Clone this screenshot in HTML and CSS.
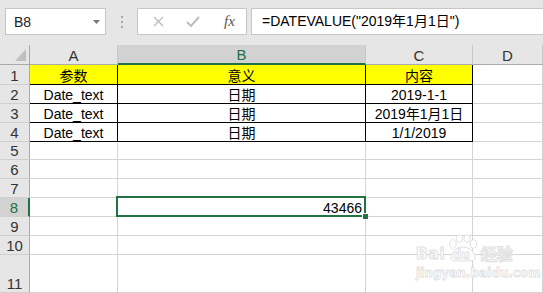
FILE: index.html
```html
<!DOCTYPE html>
<html lang="zh">
<head>
  <meta charset="UTF-8">
  <title>DATEVALUE</title>
  <link rel="stylesheet" href="styles.css">
</head>
<body>

<div class="app">

  <!-- 编辑栏 -->
  <div class="toolbar">
    <div class="namebox">
      <span>B8</span>
      <svg class="drop" width="7" height="4" viewBox="0 0 7 4"><path d="M0 0h7L3.5 4z" fill="#777"/></svg>
    </div>
    <div class="grip"><i></i><i></i><i></i></div>
    <div class="fbtns">
      <svg width="11" height="11" viewBox="0 0 11 11"><path d="M1 1l9 9M10 1l-9 9" stroke="#bdbdbd" stroke-width="1.4" fill="none"/></svg>
      <svg width="14" height="11" viewBox="0 0 14 11"><path d="M1 6l4 4 8-9" stroke="#bdbdbd" stroke-width="2" fill="none"/></svg>
      <span class="fx">fx</span>
    </div>
    <div class="formula">=DATEVALUE("2019年1月1日")</div>
  </div>

  <!-- 表格 -->
  <div class="sheet">
    <div class="corner"></div>
    <div class="colhead">A</div>
    <div class="colhead active">B</div>
    <div class="colhead">C</div>
    <div class="colhead">D</div>

    <div class="rowhead">1</div>
    <div class="cell tb yellow">参数</div>
    <div class="cell tb yellow">意义</div>
    <div class="cell tb yellow">内容</div>
    <div class="cell"></div>

    <div class="rowhead">2</div>
    <div class="cell tb">Date_text</div>
    <div class="cell tb">日期</div>
    <div class="cell tb">2019-1-1</div>
    <div class="cell"></div>

    <div class="rowhead">3</div>
    <div class="cell tb">Date_text</div>
    <div class="cell tb">日期</div>
    <div class="cell tb">2019年1月1日</div>
    <div class="cell"></div>

    <div class="rowhead">4</div>
    <div class="cell tb">Date_text</div>
    <div class="cell tb">日期</div>
    <div class="cell tb">1/1/2019</div>
    <div class="cell"></div>

    <div class="rowhead">5</div>
    <div class="cell"></div><div class="cell"></div><div class="cell"></div><div class="cell"></div>

    <div class="rowhead">6</div>
    <div class="cell"></div><div class="cell"></div><div class="cell"></div><div class="cell"></div>

    <div class="rowhead">7</div>
    <div class="cell"></div><div class="cell"></div><div class="cell"></div><div class="cell"></div>

    <div class="rowhead active">8</div>
    <div class="cell"></div>
    <div class="cell num selected">43466</div>
    <div class="cell"></div><div class="cell"></div>

    <div class="rowhead">9</div>
    <div class="cell"></div><div class="cell"></div><div class="cell"></div><div class="cell"></div>

    <div class="rowhead">10</div>
    <div class="cell"></div><div class="cell"></div><div class="cell"></div><div class="cell"></div>

    <div class="rowhead">11</div>
    <div class="cell"></div><div class="cell"></div><div class="cell"></div><div class="cell"></div>
  </div>

  <!-- 水印 -->
  <div class="watermark">
    <div class="wm-logo">
      <span class="wm-bai">Bai</span>
      <span class="wm-paw">
        <svg width="32" height="28" viewBox="0 0 32 28">
          <g fill="#fff" stroke="#e0e0e0" stroke-width="1">
            <ellipse cx="6" cy="10" rx="3.2" ry="4.2"/>
            <ellipse cx="12.5" cy="4.5" rx="3.2" ry="3.8"/>
            <ellipse cx="20" cy="4.5" rx="3.2" ry="3.8"/>
            <ellipse cx="26.5" cy="10" rx="3.2" ry="4.2"/>
            <path d="M4 24c0-7 7-11 12-11s12 4 12 11c0 3-3 3-12 3S4 27 4 24z"/>
          </g>
        </svg>
        <span class="wm-du">du</span>
      </span>
      <span class="wm-cn">经验</span>
    </div>
    <div class="wm-url">jingyan.baidu.com</div>
  </div>

</div>

</body>
</html>
```

FILE: styles.css
```css
body {
  margin: 0;
  overflow: hidden;
  background: #fff;
  font-family: "Liberation Sans", "Noto Sans CJK SC", sans-serif;
  font-size: 14px;
  color: #000;
}

.app {
  position: relative;
  width: 543px;
  height: 293px;
  overflow: hidden;
}

/* 编辑栏 */
.toolbar {
  height: 45px;
  background: #e6e6e6;
  display: flex;
  align-items: flex-start;
  padding-top: 8px;
  box-sizing: border-box;
}

.namebox {
  margin-left: 5px;
  width: 101px;
  height: 27px;
  background: #fff;
  border: 1px solid #c6c6c6;
  box-sizing: border-box;
  display: flex;
  align-items: center;
  justify-content: space-between;
  padding: 0 5px 0 8px;
  color: #222;
}

.grip {
  width: 31px;
  height: 27px;
  display: flex;
  flex-direction: column;
  align-items: center;
  justify-content: center;
  gap: 3px;
}

.grip i {
  width: 2px;
  height: 2px;
  background: #a6a6a6;
}

.fbtns {
  width: 110px;
  height: 27px;
  background: #fff;
  border: 1px solid #c6c6c6;
  box-sizing: border-box;
  display: flex;
  align-items: center;
  padding-left: 15px;
  gap: 22px;
}

.fx {
  font-family: "Liberation Serif", serif;
  font-style: italic;
  font-size: 15px;
  color: #555;
  margin-left: 2px;
}

.formula {
  flex: 1;
  margin-left: 4px;
  margin-right: -2px;
  height: 27px;
  background: #fff;
  border: 1px solid #c6c6c6;
  box-sizing: border-box;
  padding-left: 10px;
  line-height: 24px;
  white-space: nowrap;
}

/* 表格 */
.sheet {
  display: grid;
  grid-template-columns: 30px 88px 248px 107px 1fr;
  grid-template-rows: 20px 20px 19px 19px 19px 18px 19px 19px 19px 19px 19px 38px;
}

.corner {
  background: #e6e6e6;
  border-right: 1px solid #ababab;
  border-bottom: 1px solid #ababab;
  position: relative;
}

.corner::after {
  content: "";
  position: absolute;
  right: 3px;
  bottom: 3px;
  width: 0;
  height: 0;
  border-left: 11px solid transparent;
  border-bottom: 12px solid #c0c0c0;
}

.colhead {
  background: #e6e6e6;
  border-right: 1px solid #c8c8c8;
  border-bottom: 1px solid #ababab;
  display: flex;
  align-items: flex-end;
  justify-content: center;
  font-size: 15px;
  line-height: 17px;
  color: #333;
}

.colhead.active {
  background: #d2d2d2;
  border-bottom: 2px solid #217346;
  color: #217346;
}

.rowhead {
  background: #e6e6e6;
  border-right: 1px solid #ababab;
  border-bottom: 1px solid #d0d0d0;
  display: flex;
  align-items: flex-end;
  justify-content: center;
  font-size: 15px;
  line-height: 17px;
  color: #333;
}

.rowhead.active {
  background: #d2d2d2;
  border-right: 2px solid #217346;
  color: #217346;
}

.cell {
  border-right: 1px solid #d4d4d4;
  border-bottom: 1px solid #d4d4d4;
  display: flex;
  align-items: flex-end;
  justify-content: center;
  line-height: 16px;
  white-space: nowrap;
  position: relative;
}

.cell.tb {
  border-right-color: #000;
  border-bottom-color: #000;
}

.cell.yellow {
  background: #ffff00;
}

.cell.num {
  justify-content: flex-end;
  padding-right: 3px;
}

.cell.selected::after {
  content: "";
  position: absolute;
  top: -2px;
  left: -2px;
  right: -1px;
  bottom: -1px;
  border: 2px solid #217346;
}

.cell.selected::before {
  content: "";
  position: absolute;
  right: -3px;
  bottom: -3px;
  width: 5px;
  height: 5px;
  background: #217346;
  border-left: 1px solid #fff;
  border-top: 1px solid #fff;
  z-index: 1;
}

/* 水印 */
.watermark {
  position: absolute;
  left: 416px;
  top: 232px;
  color: #fff;
}

.wm-logo {
  display: flex;
  align-items: flex-end;
  height: 30px;
}

.wm-bai {
  font-family: "DejaVu Sans", sans-serif;
  font-weight: bold;
  font-size: 15px;
  line-height: 16px;
  -webkit-text-stroke: 1px #e0e0e0;
  letter-spacing: 1px;
}

.wm-paw {
  position: relative;
  width: 32px;
  height: 28px;
  margin-left: 1px;
}

.wm-paw svg {
  display: block;
}

.wm-du {
  position: absolute;
  left: 6px;
  bottom: 0;
  font-family: "DejaVu Sans", sans-serif;
  font-weight: bold;
  font-size: 12px;
  line-height: 14px;
  color: #fff;
  -webkit-text-stroke: 0.8px #e0e0e0;
}

.wm-cn {
  font-family: "Noto Sans CJK SC", sans-serif;
  font-weight: bold;
  font-size: 16px;
  line-height: 18px;
  margin-left: 2px;
  -webkit-text-stroke: 1px #e0e0e0;
}

.wm-url {
  font-family: "DejaVu Sans", sans-serif;
  font-weight: bold;
  font-size: 12px;
  line-height: 14px;
  margin-top: 4px;
  -webkit-text-stroke: 0.8px #e0e0e0;
}
```
